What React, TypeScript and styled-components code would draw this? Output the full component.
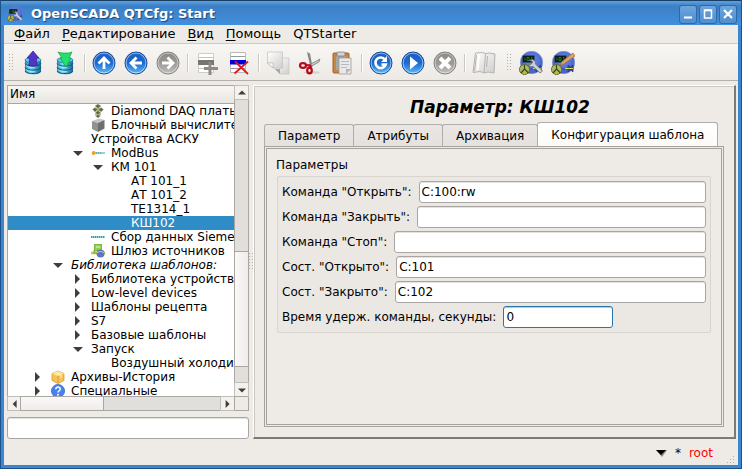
import React, { useId, useState } from "react";
import styled, { createGlobalStyle, css } from "styled-components";

const GlobalStyle = createGlobalStyle`
  * { box-sizing: border-box; }
  body { margin: 0; }
  body, button, input {
    font-family: "DejaVu Sans", sans-serif;
    font-size: 12px;
    line-height: 14px;
    color: #000;
  }
  button { padding: 0; border: 0; background: none; }
`;

const dots = css`
  background: conic-gradient(from 270deg at 1px 1px, #b0ada9 90deg, transparent 0) 0 0 / 3px 3px content-box;
`;

const Window = styled.div`
  display: flex;
  flex-direction: column;
  height: 100vh;
  min-height: 320px;
  padding: 0 1px 1px;
  background: #1e5288;
`;

const TitleBar = styled.header`
  display: flex;
  align-items: center;
  flex: none;
  gap: 8px;
  height: 25px;
  padding: 2px 4px 0 6px;
  border-top: 1px solid #1b3f63;
  background: linear-gradient(#5aa2e4, #3d7fc5 5px, #4090de);
`;

const Title = styled.h1`
  flex: 1;
  margin: 0;
  font-size: 13px;
  line-height: 20px;
  color: #fff;
  text-shadow: 1px 1px 1px #1b4377;
`;

const WindowControls = styled.div`
  display: flex;
  gap: 2px;
`;

const WindowButton = styled.button`
  display: grid;
  place-items: center;
  width: 18px;
  height: 19px;
  border: 1px solid #2d68a8;
  border-radius: 3px;
  background: linear-gradient(#6ea5dc, #4f8ece);
`;

const Client = styled.div`
  display: flex;
  flex-direction: column;
  flex: 1;
  min-height: 0;
  border: solid #3c85d0;
  border-width: 0 3px 3px;
  background: #eeebe7;
`;

const MenuBar = styled.nav`
  display: flex;
  flex: none;
  gap: 12px;
  height: 19px;
  padding: 0 10px;
  border-bottom: 1px solid #cfccc8;
`;

const MenuItem = styled.button`
  font-size: 13px;
  line-height: 18px;
`;

const Mnemonic = styled.span`
  text-decoration: underline;
  text-underline-offset: 2px;
`;

const ToolBar = styled.div`
  display: flex;
  align-items: center;
  flex: none;
  height: 37px;
  padding: 2px 0 0 5px;
  border-bottom: 1px solid #b4b0ab;
  background: linear-gradient(#f8f6f3, #edeae6);
`;

const ToolGroup = styled.div`
  display: flex;
  align-items: center;
  & + & { margin-left: 7px; }
`;

const Grip = styled.span`
  width: 8px;
  height: 18px;
  padding-right: 4px;
  ${dots}
`;

const ToolButton = styled.button`
  display: grid;
  place-items: center;
  width: 32px;
  height: 32px;
`;

const Separator = styled.span`
  width: 2px;
  height: 18px;
  margin: 0 2px 0 3px;
  border-left: 1px solid #cbc8c4;
  border-right: 1px solid #fff;
`;

const Body = styled.main`
  display: flex;
  flex: 1;
  min-height: 0;
  padding: 4px 2px 0 3px;
`;

const SidePane = styled.aside`
  display: flex;
  flex: 0 0 242px;
  flex-direction: column;
  gap: 6px;
`;

const TreeView = styled.div`
  display: grid;
  flex: 1;
  grid-template: minmax(0, 1fr) 14px / minmax(0, 1fr) 14px;
  min-height: 0;
  border: 1px solid #aaa6a2;
  background: #eeebe7;
`;

const TreeViewport = styled.div`
  overflow: hidden;
  background: #fff;
`;

const TreeHeader = styled.div`
  height: 18px;
  padding: 1px 2px;
  border-bottom: 1px solid #aaa6a2;
  background: linear-gradient(#f8f6f3, #e9e6e2);
`;

const Tree = styled.ul`
  margin: 0;
  padding: 0;
  list-style: none;
`;

const TreeRow = styled.li<{ $level: number; $selected?: boolean; $italic?: boolean }>`
  display: flex;
  align-items: center;
  height: 14px;
  padding-left: ${(p) => p.$level * 20}px;
  white-space: nowrap;
  ${(p) => p.$italic && css`font-style: italic;`}
  ${(p) => p.$selected && css`
    background: #308cc6;
    color: #fff;
  `}
`;

const Toggle = styled.button`
  display: grid;
  place-items: center;
  flex: none;
  width: 20px;
  height: 14px;
  margin-right: 3px;
`;

const RowIcon = styled.span`
  display: flex;
  flex: none;
  width: 20px;
`;

const ScrollBar = styled.div<{ $vertical?: boolean }>`
  display: flex;
  flex-direction: ${(p) => (p.$vertical ? "column" : "row")};
  border: 0 solid #aaa6a2;
  ${(p) => (p.$vertical ? css`border-left-width: 1px;` : css`border-top-width: 1px;`)}
  background: #e1dfdc;
`;

const ScrollButton = styled.button`
  display: grid;
  place-items: center;
  flex: none;
  width: 13px;
  height: 13px;
  background: #f4f2ef;
  outline: 1px solid #c2bfbb;
`;

const Track = styled.span<{ $share: number }>`
  flex: ${(p) => p.$share} 1 0;
`;

const Thumb = styled.span<{ $share: number; $vertical?: boolean }>`
  flex: ${(p) => p.$share} 1 0;
  outline: 1px solid #aaa6a2;
  background: linear-gradient(${(p) => (p.$vertical ? "90deg" : "180deg")}, #faf9f7, #efece9);
`;

const Corner = styled.span`
  border: solid #aaa6a2;
  border-width: 1px 0 0 1px;
`;

const TextField = styled.input<{ $short?: boolean; $active?: boolean }>`
  flex: ${(p) => (p.$short ? "0 0 110px" : "1 1 0")};
  min-width: 0;
  height: 22px;
  padding: 0 2px;
  border: 1px solid ${(p) => (p.$active ? "#2a76a8" : "#a8a5a2")};
  border-radius: 3px;
  outline: 0;
  background: #fff;
  box-shadow: inset 0 1px 0 ${(p) => (p.$active ? "#a9cfe6" : "#e4e2e0")};
`;

const FilterField = styled(TextField)`
  flex: none;
`;

const Splitter = styled.div`
  display: grid;
  align-items: center;
  flex: 0 0 4px;
`;

const SplitterGrip = styled.span`
  height: 18px;
  ${dots}
`;

const Page = styled.section`
  display: flex;
  flex: 1;
  flex-direction: column;
  min-width: 0;
  padding: 0 10px;
  border: solid;
  border-width: 1px 2px 2px 1px;
  border-color: #fff #7c7973 #7c7973 #fff;
  box-shadow: inset 1px 1px 0 #cac7c3;
`;

const PageTitle = styled.h2`
  margin: 0;
  padding: 11px 0 5px 12px;
  font-size: 17px;
  font-style: italic;
  line-height: 20px;
  text-align: center;
`;

const TabList = styled.div`
  display: flex;
  align-items: flex-end;
  flex: none;
  height: 24px;
`;

const Tab = styled.button<{ $selected?: boolean }>`
  height: ${(p) => (p.$selected ? 24 : 22)}px;
  padding: 0 13px;
  border: 1px solid #b0adaa;
  border-bottom: 0;
  border-radius: 3px 3px 0 0;
  background: ${(p) => (p.$selected ? "linear-gradient(#fff, #fbfaf8)" : "linear-gradient(#e9e6e3, #e4e1de)")};
  & + & { margin-left: -1px; }
`;

const TabPanel = styled.div`
  flex: 1;
  margin-bottom: 10px;
  padding: 9px;
  border: 3px double #a5a19d;
`;

const Group = styled.section`
  display: flex;
  flex-direction: column;
  gap: 3px;
`;

const GroupTitle = styled.h3`
  margin: 0;
  font-size: 12px;
  font-weight: normal;
  line-height: 15px;
`;

const Fields = styled.div`
  display: flex;
  flex-direction: column;
  gap: 3px;
  margin: 0 1px;
  padding: 4px;
  border: 1px solid #d8d5d1;
  border-radius: 2px;
  background: #ebe8e4;
`;

const Field = styled.div`
  display: flex;
  align-items: center;
  gap: 7px;
`;

const StatusBar = styled.footer`
  display: flex;
  align-items: center;
  justify-content: flex-end;
  flex: none;
  gap: 8px;
  height: 26px;
  padding: 2px 2px 0 0;
`;

const User = styled.span`
  margin-right: 3px;
  color: #f00;
`;

const SizeGrip = styled.span`
  align-self: flex-end;
  width: 12px;
  height: 12px;
  clip-path: polygon(100% 0, 100% 100%, 0 100%);
  ${dots}
`;

/* ---------- drawings ---------- */

type Dir = "up" | "down" | "left" | "right";
const arrowPath: Record<Dir, string> = {
  up: "M0 7 L5 2 L10 7Z",
  down: "M0 3 H10 L5 8Z",
  left: "M7 0 L2 5 L7 10Z",
  right: "M2 0 L7 5 L2 10Z",
};
const Arrow = ({ dir, size = 8 }: { dir: Dir; size?: number }) => (
  <svg width={size} height={size} viewBox="0 0 10 10"><path d={arrowPath[dir]} fill="#403e3c" /></svg>
);

const Svg = ({ size = 24, children }: { size?: number; children: React.ReactNode }) => (
  <svg width={size} height={size} viewBox="0 0 24 24">{children}</svg>
);

const HiddenSvg = styled.svg`
  position: absolute;
`;

const Defs = () => (
  <HiddenSvg width="0" height="0" aria-hidden="true">
    <defs>
      <linearGradient id="blue" x1="0" y1="0" x2="0" y2="1">
        <stop offset="0" stopColor="#1d5fc0" /><stop offset=".5" stopColor="#1b6ad0" /><stop offset="1" stopColor="#5fbcf8" />
      </linearGradient>
      <linearGradient id="gray" x1="0" y1="0" x2="0" y2="1">
        <stop offset="0" stopColor="#8b8985" /><stop offset=".5" stopColor="#9b9995" /><stop offset="1" stopColor="#c4c2be" />
      </linearGradient>
      <linearGradient id="cyl" x1="0" y1="0" x2="1" y2="0">
        <stop offset="0" stopColor="#1d86b4" /><stop offset=".35" stopColor="#7fdcf5" /><stop offset="1" stopColor="#12638c" />
      </linearGradient>
      <linearGradient id="paper" x1="0" y1="0" x2="1" y2="1">
        <stop offset="0" stopColor="#fff" /><stop offset="1" stopColor="#cfcecc" />
      </linearGradient>
      <radialGradient id="globe" cx=".5" cy=".4" r=".6">
        <stop offset="0" stopColor="#6f8df0" /><stop offset="1" stopColor="#3e5cc4" />
      </radialGradient>
    </defs>
  </HiddenSvg>
);

const Disc = ({ gray, children }: { gray?: boolean; children: React.ReactNode }) => (
  <Svg>
    <circle cx="12" cy="12" r="11" fill={gray ? "url(#gray)" : "url(#blue)"} stroke={gray ? "#85837f" : "#164a9c"} />
    <circle cx="12" cy="12" r="9.9" fill="none" stroke="#fff" strokeOpacity={gray ? ".5" : ".6"} strokeWidth=".9" />
    {children}
  </Svg>
);

const DiscArrow = ({ turn, gray }: { turn: number; gray?: boolean }) => (
  <Disc gray={gray}>
    <path transform={`rotate(${turn} 12 12)`} d="M12 18V7.5M6.5 12.5L12 7l5.5 5.5" fill="none" stroke="#fff" strokeWidth="2.8" />
  </Disc>
);

const Database = ({ load }: { load?: boolean }) => (
  <Svg>
    <path d="M4 9v11c0 4.500 16 4.500 16 0V9z" fill="url(#cyl)" />
    <path d="M4 12.500c1 3.400 15 3.400 16 0M4 16.500c1 3.400 15 3.400 16 0M4 20c1 3.400 15 3.400 16 0" fill="none" stroke="#145d84" />
    <path d="M5 14.500c2 2.500 8 2.400 9 2M5 18.500c2 2.500 8 2.400 9 2" fill="none" stroke="#a6ecfb" />
    <ellipse cx="12" cy="9" rx="8" ry="2.600" fill="#62c6e6" stroke="#1c7da6" strokeWidth=".7" />
    {load
      ? <path d="M5 1l4 1h7l3-1-3 6h2l-5 9-6-9h2z" fill="#22e06c" stroke="#0fa548" strokeWidth=".7" />
      : <path d="M12 0l6 7h-2.500c0 3 0 5 1 7-2 1.500-7 1.500-9 0 1-2 1-4 1-7H6z" fill="#5234c8" stroke="#332096" strokeWidth=".7" />}
  </Svg>
);

const AddRow = () => (
  <Svg>
    <path d="M3.500 2.500h15v19h-15z" fill="#fff" stroke="#cfcdca" />
    <path d="M4 6.500h14M4 17.500h14" stroke="#c5c3c0" />
    <path d="M3 9h16v5H3z" fill="#777571" />
    <path d="M15 11v13M9 17.500h14" stroke="#8d8b88" strokeWidth="3" />
  </Svg>
);

const DeleteRow = () => (
  <Svg>
    <path d="M3.500 1.500h15v20h-15z" fill="#fff" stroke="#bbb" />
    <path d="M4 5.500h14M4 17.500h14" stroke="#999" />
    <path d="M3 9h16v4.500H3z" fill="#0000d8" />
    <path d="M8 10.500L21 23M21 10.500L7.500 22.500" stroke="#e2161c" strokeWidth="1.800" />
  </Svg>
);

const Copy = () => (
  <Svg>
    <path d="M9 7h14v16h-9l-5-5z" fill="url(#paper)" stroke="#c6c4c1" strokeWidth=".7" />
    <path d="M9 18l5 5v-5z" fill="#aaa8a5" />
    <path d="M1.500 1h15v16H7l-5.500-5z" fill="url(#paper)" stroke="#c0beba" strokeWidth=".7" />
    <path d="M1.500 12L7 17v-5z" fill="#fff" stroke="#aaa8a5" strokeWidth=".6" />
  </Svg>
);

const Cut = () => (
  <Svg>
    <ellipse cx="14" cy="21.500" rx="8" ry="1.500" fill="#000" opacity=".1" />
    <path d="M9 1l3 1.500 2.500 13-2 1z" fill="#8a8886" />
    <path d="M22 8l-1 3-9 5-2-1.500z" fill="#c9c7c5" stroke="#777572" strokeWidth=".7" />
    <ellipse cx="5" cy="14.500" rx="3" ry="2.300" fill="none" stroke="#b8081a" strokeWidth="2.200" />
    <ellipse cx="11.500" cy="19.500" rx="2.300" ry="2.800" fill="none" stroke="#b8081a" strokeWidth="2.200" />
    <path d="M7.500 14l5 .5v3" fill="none" stroke="#b8081a" strokeWidth="2" />
  </Svg>
);

const Paste = () => (
  <Svg>
    <rect x="3" y="2" width="16" height="20" rx="1" fill="#c58743" stroke="#9d6427" />
    <path d="M6 5h10v14H6z" fill="#a8a6a2" />
    <rect x="7" y="1" width="8" height="4" rx="1" fill="#d5d3d0" stroke="#777" strokeWidth=".7" />
    <path d="M9 7h12v16H9z" fill="#e9e9ea" stroke="#9d9b98" strokeWidth=".8" />
    <path d="M11 10.500h8M11 13.500h8M11 16.500h6" stroke="#b5bac4" />
    <path d="M16 23l5-5h-5z" fill="#b7b5b2" />
  </Svg>
);

const Book = () => (
  <Svg>
    <path d="M3.500 2l7-.5 3 1 4-.5 5.500 1-1 19-6-1-4 1-4-1.500-7 1z" fill="url(#paper)" stroke="#b5b3af" />
    <path d="M13.500 3L12 21" stroke="#b5b3af" />
    <path d="M4.500 4L2.500 20M15.500 5l-1 11" stroke="#a5a39f" strokeWidth=".8" />
    <path d="M7 4L5.500 19" stroke="#fff" strokeWidth="2" />
  </Svg>
);

const Station = ({ size = 24, pencil }: { size?: number; pencil?: boolean }) => (
  <Svg size={size}>
    <circle cx="12.500" cy="11.500" r="11.200" fill="url(#globe)" stroke="#8795d0" strokeWidth=".6" />
    <path d="M8 18h15M17 14v7l4-3.500zM22 14v7l-4-3.500z" fill="#31479a" stroke="#27388a" strokeWidth=".7" />
    <path d="M14 17.500h8" stroke="#d9df45" />
    <rect x="4" y="5" width="11" height="6" fill="#031603" stroke="#223" />
    <path d="M6 6.500v3M8 6.500h2v3h-2zM12 6.500h1v3" stroke="#25a02f" strokeWidth=".8" fill="none" />
    <circle cx="5.500" cy="18.500" r="5" fill="#b4bd55" stroke="#5e6a35" />
    <path d="M5.500 18V14M5.500 18L2 22M5.500 18l4 4" stroke="#3c4520" strokeWidth="1.200" />
    {pencil
      ? <path d="M22 2l2 3-11 8-4 1 2-3.500z" fill="#dca06a" stroke="#a46a3c" strokeWidth=".7" />
      : <path d="M10 9.500l3 .5.5 2-2 1.500-2-.5c.5 2.500 3 3 4.500 2.500L21 22l2.500-2-7-7c.5-2.500-2-5-4.500-4.500z" fill="#cbd1d9" stroke="#626a78" strokeWidth=".8" />}
  </Svg>
);

const Icon14 = ({ children }: { children: React.ReactNode }) => (
  <svg width="14" height="14" viewBox="0 0 14 14">{children}</svg>
);

const rowIcons: Record<string, React.ReactNode> = {
  diamond: (
    <Icon14>
      <path d="M7 1v12M3 5.500h8M4 10h6" stroke="#c9b48e" strokeWidth="2.400" />
      <path d="M7 0l3 2-3 2.500L4 2zM4 3.500l2.500 2L4 8 1.500 5.500zM10 3.500l2.500 2L10 8 7.500 5.500zM7 6.500l2.500 2L7 11 4.500 8.500zM7 10.500l2.500 1.500L7 14l-2.500-2z" fill="#54704a" stroke="#c3b491" strokeWidth=".5" />
    </Icon14>
  ),
  cube: (
    <Icon14>
      <path d="M1 3l7-2.500L13.500 2 7 5z" fill="#c4c4c4" /><path d="M1 3l6 2v9l-6-3z" fill="#929292" /><path d="M7 5l6.500-3v8.500L7 14z" fill="#6e6e6e" />
    </Icon14>
  ),
  modbus: (
    <Icon14>
      <circle cx="2.600" cy="7" r="1.900" fill="#efa11f" /><path d="M4 7h10" stroke="#6fbccb" strokeWidth="1.400" /><path d="M5 7h6" stroke="#2f8ca4" strokeDasharray="1 1" />
    </Icon14>
  ),
  siemens: (
    <Icon14><path d="M0 7h14" stroke="#2ba6a6" strokeWidth="2" strokeDasharray="1.500 .5" /></Icon14>
  ),
  gateway: (
    <Icon14>
      <rect x="3.500" y="0.500" width="7" height="6" fill="#8fd04d" stroke="#7cba45" /><path d="M5 3h4" stroke="#eaf6d0" />
      <path d="M0 9h14" stroke="#d6c23a" strokeWidth="2.500" /><circle cx="9.500" cy="9.500" r="4" fill="#5d76b8" />
      <path d="M6 9c2-2 5-2 7 0" stroke="#c8d7ef" fill="none" /><path d="M3.500 6v4" stroke="#7cba45" strokeWidth="2" />
    </Icon14>
  ),
  archive: (
    <Icon14>
      <path d="M1 3.500L7 1l6 2.500v7L7 13.500l-6-3z" fill="#f5c451" stroke="#cf942e" strokeWidth=".7" />
      <path d="M1 3.500L7 6l6-2.500L7 1z" fill="#fde49a" /><path d="M7 6v7.500" stroke="#d99e36" /><path d="M4 2.300L10 5v3" stroke="#fff3cd" fill="none" />
    </Icon14>
  ),
  help: (
    <Icon14>
      <circle cx="7" cy="7" r="6.500" fill="#4b83ee" stroke="#2d5fcb" strokeWidth=".8" />
      <path d="M4.800 5.200c0-3 4.600-2.700 4.400 0 0 1.500-2.100 1.600-2.200 3.300" fill="none" stroke="#fff" strokeWidth="1.500" /><circle cx="7" cy="10.800" r="1" fill="#fff" />
    </Icon14>
  ),
};

/* ---------- data ---------- */

type Node = { level: number; text: string; icon?: string; open?: boolean; italic?: boolean };
const nodes: Node[] = [
  { level: 3, text: "Diamond DAQ платы", icon: "diamond" },
  { level: 3, text: "Блочный вычислитель", icon: "cube" },
  { level: 3, text: "Устройства АСКУ" },
  { level: 3, text: "ModBus", icon: "modbus", open: true },
  { level: 4, text: "КМ 101", open: true },
  { level: 5, text: "АТ 101_1" },
  { level: 5, text: "АТ 101_2" },
  { level: 5, text: "ТЕ1314_1" },
  { level: 5, text: "КШ102" },
  { level: 3, text: "Сбор данных Siemens", icon: "siemens" },
  { level: 3, text: "Шлюз источников", icon: "gateway" },
  { level: 2, text: "Библиотека шаблонов:", open: true, italic: true },
  { level: 3, text: "Библиотека устройств", open: false },
  { level: 3, text: "Low-level devices", open: false },
  { level: 3, text: "Шаблоны рецепта", open: false },
  { level: 3, text: "S7", open: false },
  { level: 3, text: "Базовые шаблоны", open: false },
  { level: 3, text: "Запуск", open: true },
  { level: 4, text: "Воздушный холодильник" },
  { level: 1, text: "Архивы-История", icon: "archive", open: false },
  { level: 1, text: "Специальные", icon: "help", open: false },
];

const menus = ["Файл", "Редактирование", "Вид", "Помощь"];
const tabs = ["Параметр", "Атрибуты", "Архивация", "Конфигурация шаблона"];

const toolGroups: [string, React.ReactNode][][] = [
  [["Загрузить", <Database />], ["Сохранить", <Database load />]],
  [["Вверх", <DiscArrow turn={0} />], ["Назад", <DiscArrow turn={-90} />], ["Вперёд", <DiscArrow turn={90} gray />]],
  [["Добавить", <AddRow />], ["Удалить", <DeleteRow />]],
  [["Копировать", <Copy />], ["Вырезать", <Cut />], ["Вставить", <Paste />]],
  [
    ["Обновить", <Disc><path d="M16 8.500A5.300 5.300 0 1 0 16.800 13.500H12.500" fill="none" stroke="#fff" strokeWidth="2.600" /><path d="M18 5v6h-6z" fill="#fff" /></Disc>],
    ["Запустить", <Disc><path d="M9 5.500L17 12l-8 6.500z" fill="#fff" /></Disc>],
    ["Остановить", <Disc gray><path d="M7 7l10 10M17 7L7 17" stroke="#fff" strokeWidth="4" /></Disc>],
  ],
  [["Руководство", <Book />]],
];

function LabeledField({ label, value, short }: { label: string; value: string; short?: boolean }) {
  const id = useId();
  return (
    <Field>
      <label htmlFor={id}>{label}</label>
      <TextField id={id} defaultValue={value} $short={short} $active={short} />
    </Field>
  );
}

export default function App() {
  const [selected, setSelected] = useState("КШ102");
  const [tab, setTab] = useState(3);
  return (
    <Window>
      <GlobalStyle />
      <Defs />
      <TitleBar>
        <Station size={16} />
        <Title>OpenSCADA QTCfg: Start</Title>
        <WindowControls>
          <WindowButton aria-label="Свернуть"><svg width="10" height="10"><path d="M1 8.500h8" stroke="#fff" strokeWidth="2" /></svg></WindowButton>
          <WindowButton aria-label="Развернуть"><svg width="10" height="10"><path d="M1.500 1h7v8h-7zM1 1.500h8" fill="none" stroke="#fff" strokeWidth="1.500" /></svg></WindowButton>
          <WindowButton aria-label="Закрыть"><svg width="10" height="10"><path d="M1 1l8 8M9 1L1 9" stroke="#fff" strokeWidth="2.200" /></svg></WindowButton>
        </WindowControls>
      </TitleBar>
      <Client>
        <MenuBar>
          {menus.map((m) => <MenuItem key={m}><Mnemonic>{m[0]}</Mnemonic>{m.slice(1)}</MenuItem>)}
          <MenuItem>QTStarter</MenuItem>
        </MenuBar>
        <ToolBar>
          <ToolGroup>
            <Grip />
            {toolGroups.map((group, i) => (
              <React.Fragment key={i}>
                {i > 0 && <Separator />}
                {group.map(([name, icon]) => <ToolButton key={name} aria-label={name}>{icon}</ToolButton>)}
              </React.Fragment>
            ))}
          </ToolGroup>
          <ToolGroup>
            <Grip />
            <ToolButton aria-label="QTCfg"><Station /></ToolButton>
            <ToolButton aria-label="Vision"><Station pencil /></ToolButton>
          </ToolGroup>
        </ToolBar>
        <Body>
          <SidePane>
            <TreeView>
              <TreeViewport>
                <TreeHeader>Имя</TreeHeader>
                <Tree role="tree">
                  {nodes.map((n) => (
                    <TreeRow
                      key={n.text}
                      role="treeitem"
                      aria-selected={n.text === selected}
                      aria-expanded={n.open}
                      $level={n.level}
                      $italic={n.italic}
                      $selected={n.text === selected}
                      onClick={() => setSelected(n.text)}
                    >
                      <Toggle as={n.open === undefined ? "span" : "button"}>
                        {n.open !== undefined && <Arrow dir={n.open ? "down" : "right"} size={10} />}
                      </Toggle>
                      {n.icon && <RowIcon>{rowIcons[n.icon]}</RowIcon>}
                      {n.text}
                    </TreeRow>
                  ))}
                </Tree>
              </TreeViewport>
              <ScrollBar $vertical>
                <ScrollButton aria-label="Прокрутить вверх"><Arrow dir="up" /></ScrollButton>
                <Track $share={152} />
                <Thumb $share={113} $vertical />
                <Track $share={17} />
                <ScrollButton aria-label="Прокрутить вниз"><Arrow dir="down" /></ScrollButton>
              </ScrollBar>
              <ScrollBar>
                <ScrollButton aria-label="Прокрутить влево"><Arrow dir="left" /></ScrollButton>
                <Thumb $share={82} />
                <Track $share={117} />
                <ScrollButton aria-label="Прокрутить вправо"><Arrow dir="right" /></ScrollButton>
              </ScrollBar>
              <Corner />
            </TreeView>
            <FilterField aria-label="Фильтр" />
          </SidePane>
          <Splitter><SplitterGrip /></Splitter>
          <Page>
            <PageTitle>Параметр: КШ102</PageTitle>
            <TabList role="tablist">
              {tabs.map((t, i) => (
                <Tab key={t} role="tab" aria-selected={i === tab} $selected={i === tab} onClick={() => setTab(i)}>{t}</Tab>
              ))}
            </TabList>
            <TabPanel role="tabpanel">
              <Group>
                <GroupTitle>Параметры</GroupTitle>
                <Fields>
                  <LabeledField label={'Команда "Открыть":'} value="C:100:rw" />
                  <LabeledField label={'Команда "Закрыть":'} value="" />
                  <LabeledField label={'Команда "Стоп":'} value="" />
                  <LabeledField label={'Сост. "Открыто":'} value="C:101" />
                  <LabeledField label={'Сост. "Закрыто":'} value="C:102" />
                  <LabeledField label="Время удерж. команды, секунды:" value="0" short />
                </Fields>
              </Group>
            </TabPanel>
          </Page>
        </Body>
        <StatusBar>
          <svg width="11" height="7"><path d="M0 0h11L6 7z" fill="#8a8784" /><path d="M0 0h10L5 5z" fill="#000" /></svg>
          <span>*</span>
          <User>root</User>
          <SizeGrip />
        </StatusBar>
      </Client>
    </Window>
  );
}
